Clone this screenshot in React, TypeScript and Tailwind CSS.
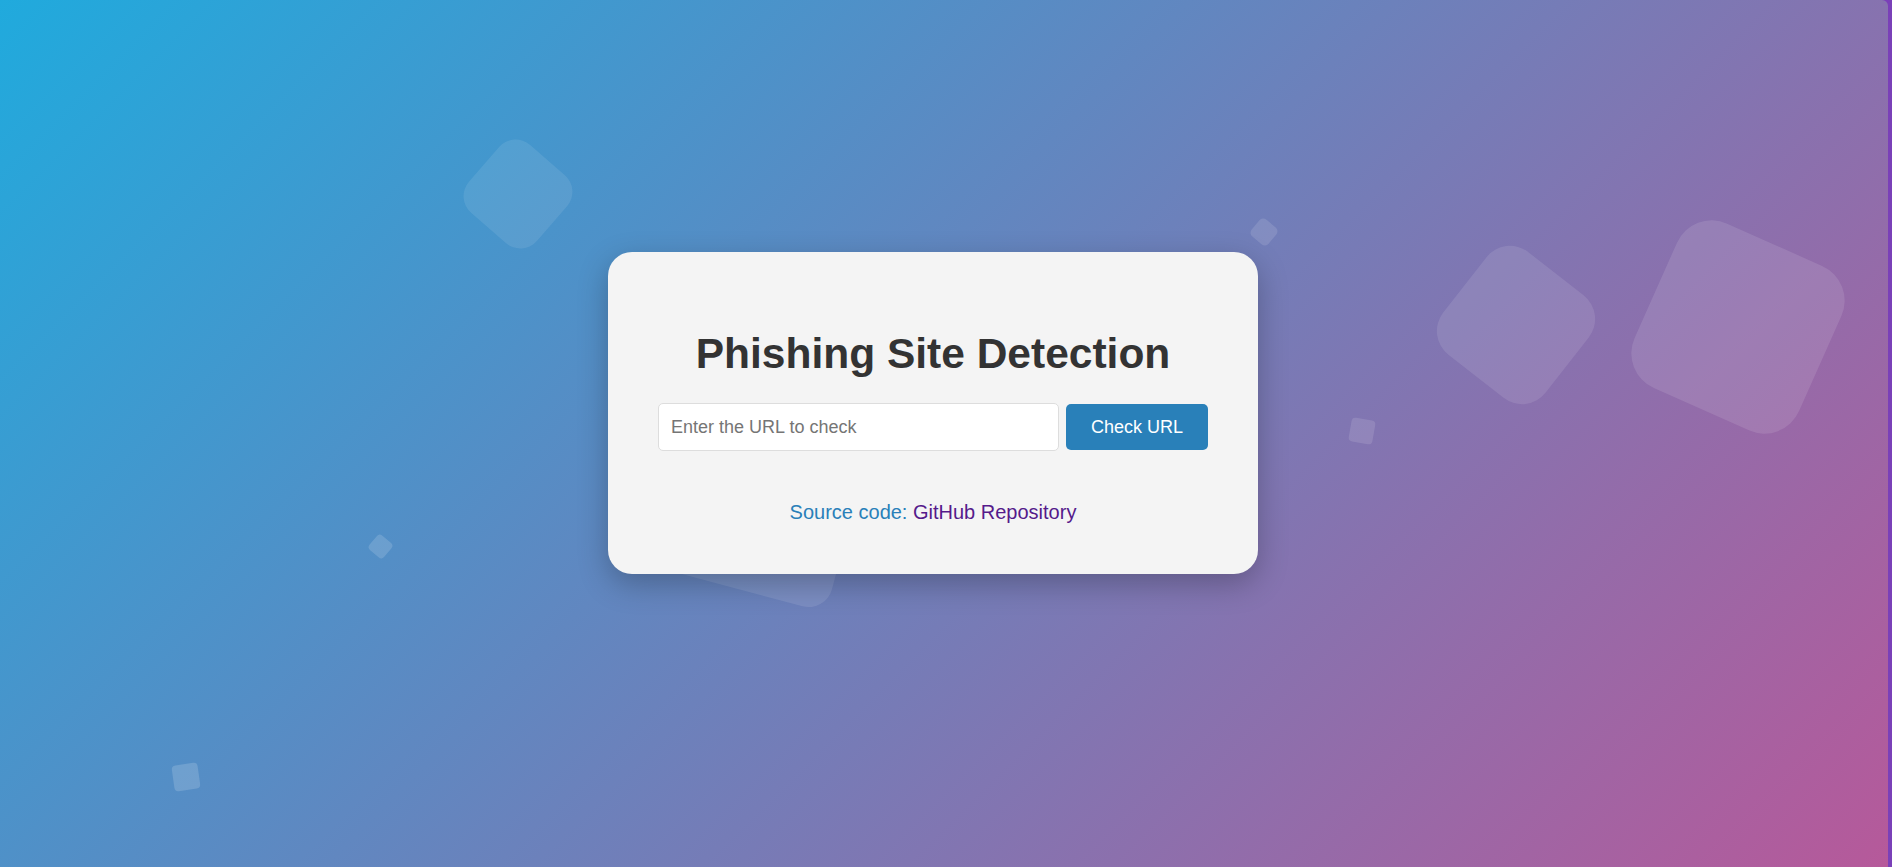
import React, { useState } from "react";

// floating rounded squares in the background (centre x/y, side, rotation, radius, alpha)
const shapes = [
  { x: 518, y: 194, s: 90, rot: 41, r: 22, a: 0.09 },
  { x: 755, y: 490, s: 200, rot: 15, r: 24, a: 0.1 },
  { x: 1264, y: 232, s: 22, rot: 40, r: 5, a: 0.12 },
  { x: 1362, y: 431, s: 24, rot: 10, r: 4, a: 0.12 },
  { x: 1516, y: 325, s: 130, rot: 38, r: 30, a: 0.1 },
  { x: 1738, y: 327, s: 180, rot: 24, r: 38, a: 0.11 },
  { x: 380, y: 546, s: 19, rot: 40, r: 4, a: 0.15 },
  { x: 186, y: 777, s: 26, rot: -8, r: 4, a: 0.16 },
];

export default function App() {
  const [url, setUrl] = useState("");

  return (
    <div className="flex h-[867px] w-full overflow-hidden bg-[#7a40b8] font-['Liberation_Sans',Arial,sans-serif]">
      <div className="relative isolate flex flex-1 items-center justify-center overflow-hidden rounded-tr-[6px] bg-[linear-gradient(135deg,#20aadd,#b6599a)]">
        {shapes.map((sh, i) => (
          <div
            key={i}
            aria-hidden="true"
            className="absolute -z-10"
            style={{
              left: sh.x - sh.s / 2,
              top: sh.y - sh.s / 2,
              width: sh.s,
              height: sh.s,
              borderRadius: sh.r,
              transform: `rotate(${sh.rot}deg)`,
              background: `rgba(255,255,255,${sh.a})`,
            }}
          />
        ))}

        <div className="mr-[22px] mb-[41px] flex h-[322px] w-[650px] flex-col items-center rounded-[24px] bg-[#f4f4f4] px-[50px] pt-[78px] shadow-[0_10px_30px_rgba(0,0,0,0.25)]">
          <h1 className="text-[42.5px] leading-[48px] font-bold text-[#333333]">
            Phishing Site Detection
          </h1>
          <form
            className="mt-[25px] flex w-full gap-[7px]"
            onSubmit={(e) => e.preventDefault()}
          >
            <input
              type="text"
              value={url}
              onChange={(e) => setUrl(e.target.value)}
              placeholder="Enter the URL to check"
              className="h-[48px] flex-1 rounded-[5px] border border-[#dddddd] bg-white px-[12px] text-[18px] text-[#333333] placeholder:text-[#757575] focus:outline-none"
            />
            <button
              type="submit"
              className="mt-px h-[46px] w-[142px] rounded-[5px] bg-[#2980b9] text-[18px] text-white"
            >
              Check URL
            </button>
          </form>
          <p className="mt-[50px] text-[20px] leading-[23px] text-[#2980b9]">
            Source code:{" "}
            <a href="#" className="text-[#551a8b]">
              GitHub Repository
            </a>
          </p>
        </div>
      </div>
      <div className="w-[4px] shrink-0" />
    </div>
  );
}
